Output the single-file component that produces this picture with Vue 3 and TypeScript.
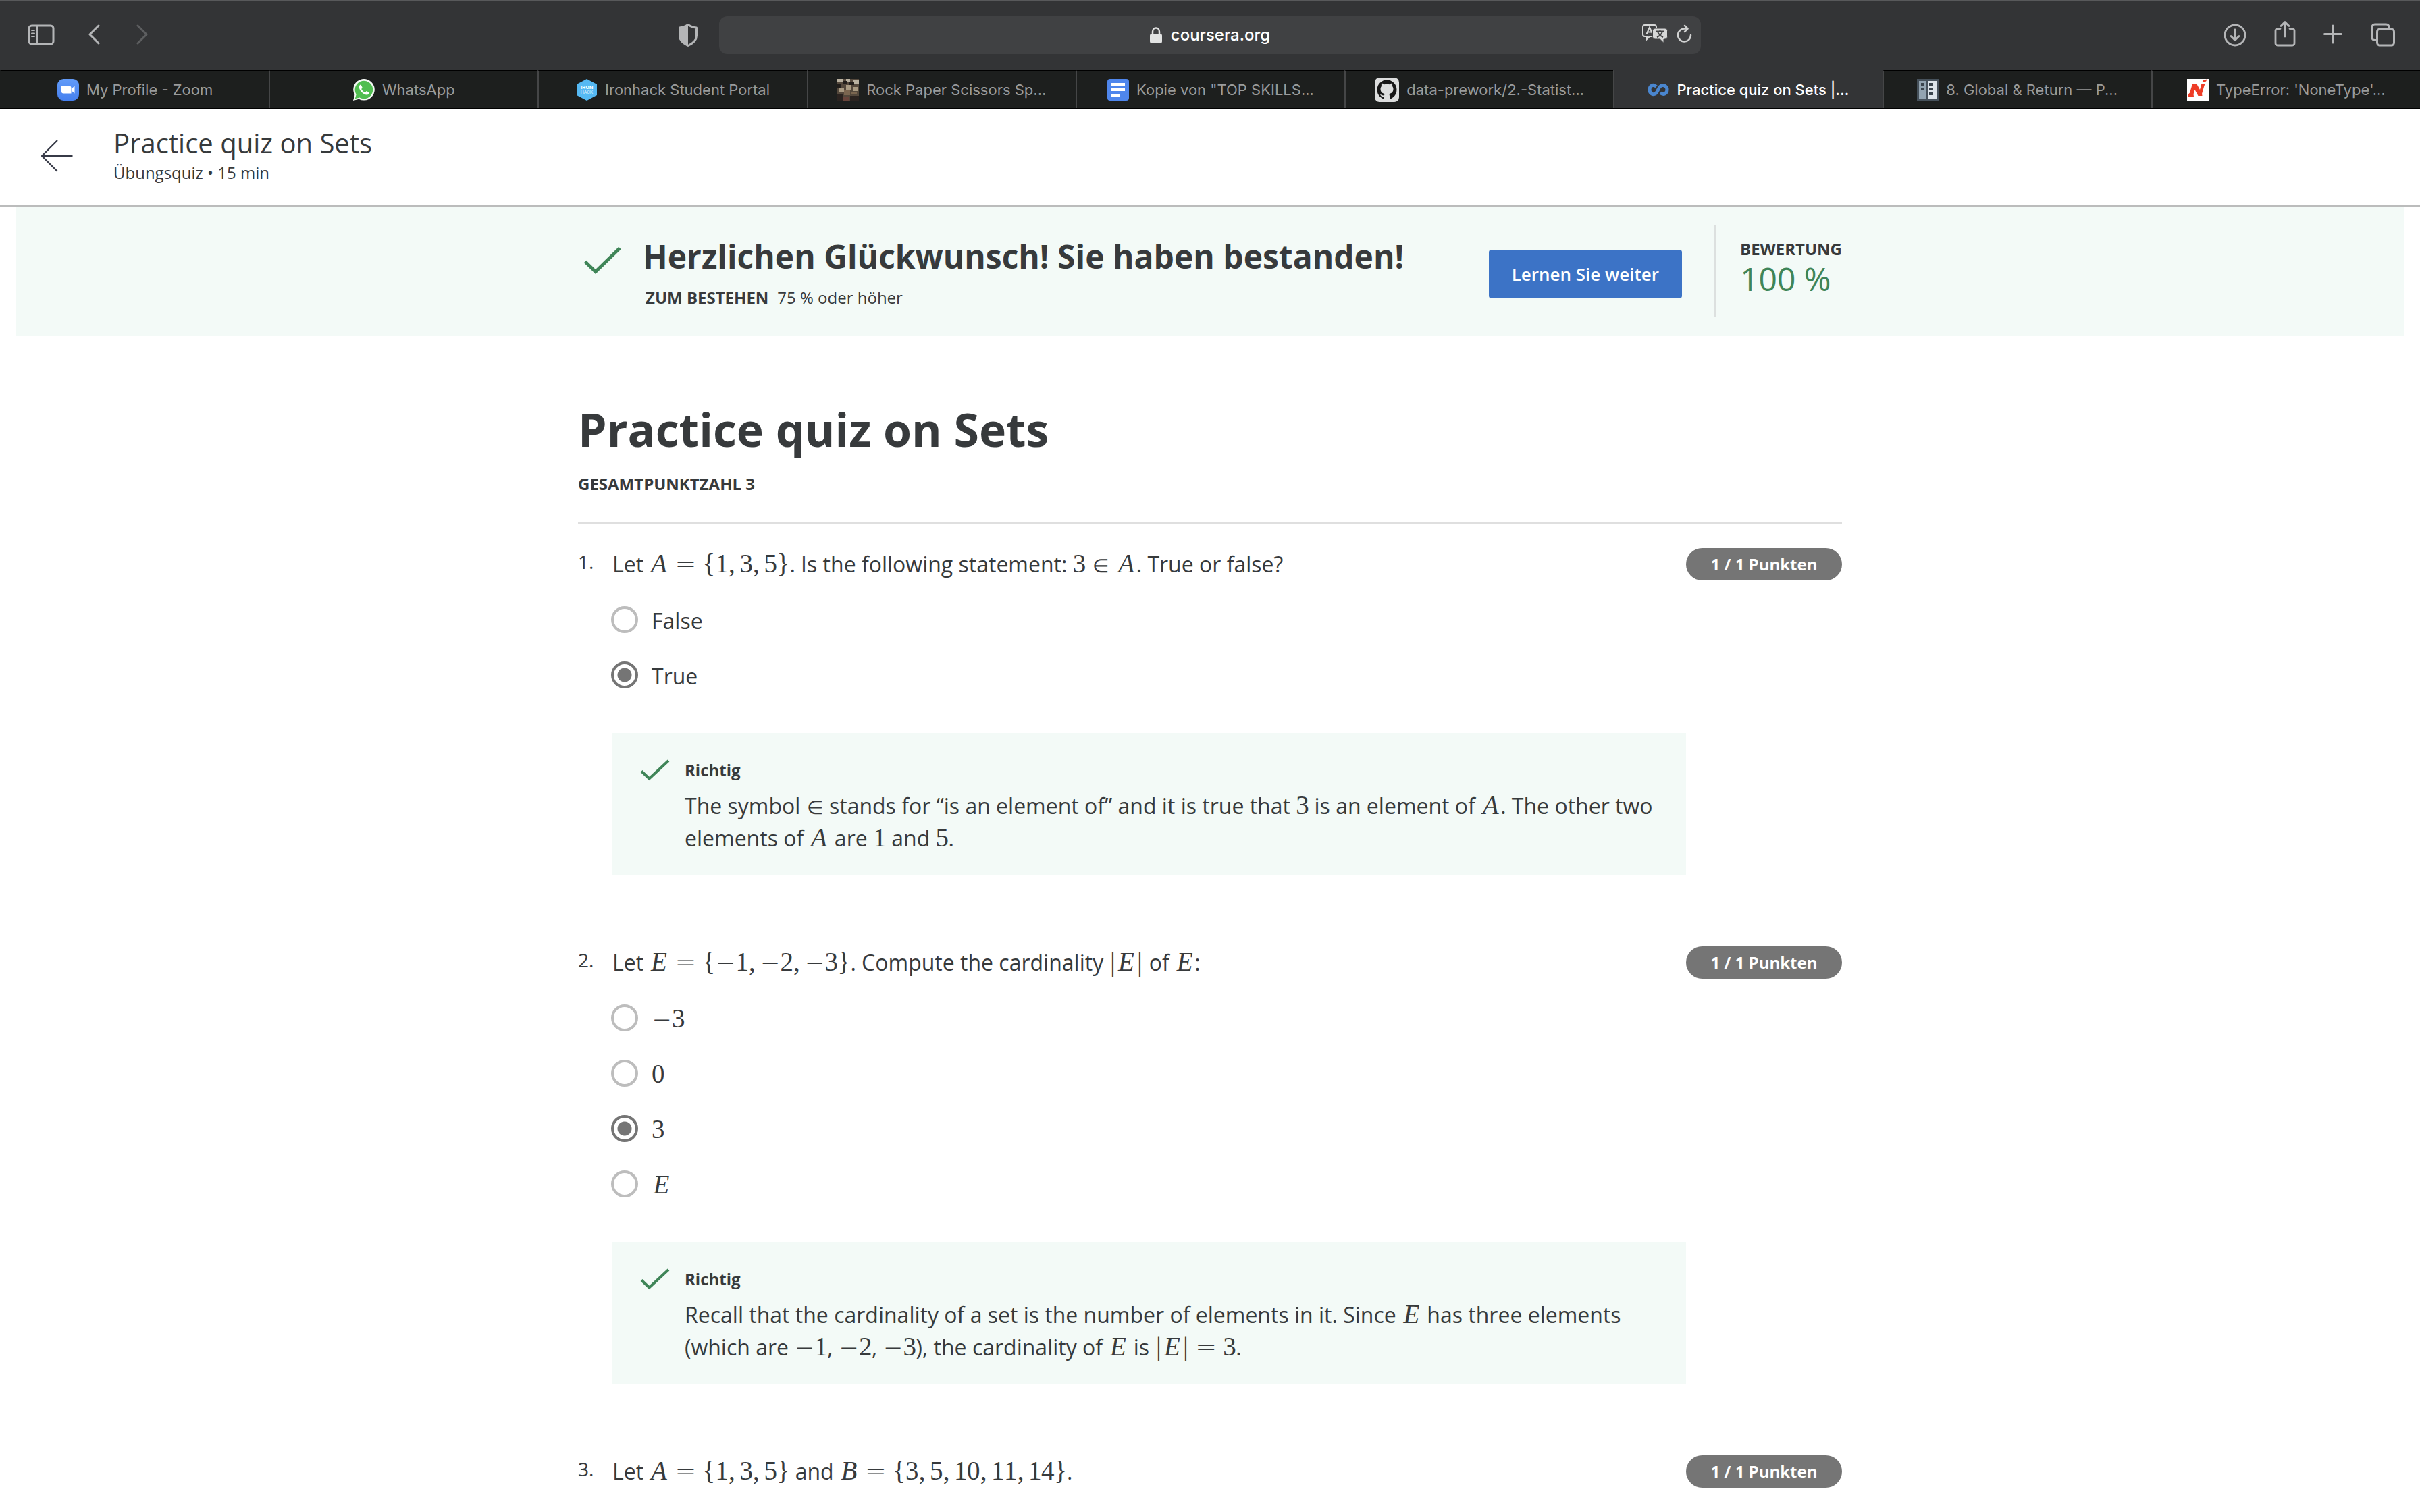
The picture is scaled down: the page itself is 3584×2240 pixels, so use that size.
<script setup lang="ts">
import { ref } from 'vue'

interface Tab { title: string; icon: string; active?: boolean }
interface Part { text?: string; math?: string }
interface Option { id: string; label: Part[] }
interface Question {
  prompt: Part[]
  options: Option[]
  answer: string
  feedback?: Part[]
}

const tabs: Tab[] = [
  { title: 'My Profile - Zoom', icon: 'zoom' },
  { title: 'WhatsApp', icon: 'whatsapp' },
  { title: 'Ironhack Student Portal', icon: 'ironhack' },
  { title: 'Rock Paper Scissors Sp...', icon: 'photo' },
  { title: 'Kopie von "TOP SKILLS...', icon: 'docs' },
  { title: 'data-prework/2.-Statist...', icon: 'github' },
  { title: 'Practice quiz on Sets |...', icon: 'coursera', active: true },
  { title: '8. Global & Return — P...', icon: 'book' },
  { title: "TypeError: 'NoneType'...", icon: 'net' },
]

const questions = ref<Question[]>([
  {
    prompt: [
      { text: 'Let ' }, { math: 'A={1,3,5}' }, { text: '. Is the following statement: ' },
      { math: '3∈A' }, { text: '. True or false?' },
    ],
    options: [
      { id: 'false', label: [{ text: 'False' }] },
      { id: 'true', label: [{ text: 'True' }] },
    ],
    answer: 'true',
    feedback: [
      { text: 'The symbol ' }, { math: '∈' },
      { text: ' stands for “is an element of” and it is true that ' }, { math: '3' },
      { text: ' is an element of ' }, { math: 'A' }, { text: '. The other two elements of ' },
      { math: 'A' }, { text: ' are ' }, { math: '1' }, { text: ' and ' }, { math: '5' }, { text: '.' },
    ],
  },
  {
    prompt: [
      { text: 'Let ' }, { math: 'E={−1,−2,−3}' }, { text: '. Compute the cardinality ' },
      { math: '|E|' }, { text: ' of ' }, { math: 'E' }, { text: ':' },
    ],
    options: [
      { id: 'minus3', label: [{ math: '−3' }] },
      { id: 'zero', label: [{ math: '0' }] },
      { id: 'three', label: [{ math: '3' }] },
      { id: 'set', label: [{ math: 'E' }] },
    ],
    answer: 'three',
    feedback: [
      { text: 'Recall that the cardinality of a set is the number of elements in it. Since ' },
      { math: 'E' }, { text: ' has three elements (which are ' }, { math: '−1' }, { text: ', ' },
      { math: '−2' }, { text: ', ' }, { math: '−3' }, { text: '), the cardinality of ' },
      { math: 'E' }, { text: ' is ' }, { math: '|E|=3' }, { text: '.' },
    ],
  },
  {
    prompt: [
      { text: 'Let ' }, { math: 'A={1,3,5}' }, { text: ' and ' },
      { math: 'B={3,5,10,11,14}' }, { text: '.' },
    ],
    options: [],
    answer: '',
  },
])

/* Spacing class of one math symbol: relations get room only between operands. */
function symbolClass(symbol: string, length: number): string {
  if (/[A-Z]/.test(symbol)) return 'variable'
  if (symbol === '=') return 'equals relation'
  if (symbol === '∈') return length > 1 ? 'member relation' : 'member'
  if (symbol === '−') return 'minus'
  if (symbol === ',') return 'comma'
  if (symbol === '|') return 'bar'
  return 'digit'
}

/* Words of a running text, each keeping the space that follows it. */
function words(text = ''): string[] {
  return text.match(/\s*\S+\s*/g) ?? [text]
}
</script>

<template>
  <div class="window">
    <header class="toolbar">
      <div class="tools">
        <button class="tool" aria-label="Sidebar">
          <svg width="40" height="32" viewBox="0 0 40 32" fill="none" stroke="#b4b5b7" stroke-width="3"><rect x="2" y="2" width="36" height="27" rx="4" /><path d="M14.500 2v27" /><path d="M6 9h4M6 13.500h4M6 18h4" stroke-width="2" stroke-linecap="round" /></svg>
        </button>
        <button class="tool back" aria-label="Back">
          <svg width="20" height="32" viewBox="0 0 20 32" fill="none" stroke="#b4b5b7" stroke-width="3" stroke-linecap="round" stroke-linejoin="round"><path d="M15 2L2 15l13 13" /></svg>
        </button>
        <button class="tool forward" aria-label="Forward">
          <svg width="20" height="32" viewBox="0 0 20 32" fill="none" stroke="#5d5e60" stroke-width="3" stroke-linecap="round" stroke-linejoin="round"><path d="M3 2l13 13L3 28" /></svg>
        </button>
        <button class="tool shield" aria-label="Privacy report">
          <svg width="28" height="34" viewBox="0 0 28 34"><path d="M14 1.500C10 4.500 6 5.500 1.500 6v12c0 7 6 11.500 12.500 14.500C20.500 29.500 26.500 25 26.500 18V6C22 5.500 18 4.500 14 1.500z" fill="none" stroke="#b4b5b7" stroke-width="3" stroke-linejoin="round" /><path d="M14 2v30C7 29 2 25 2 18V6.500C7 6 10 5 14 2z" fill="#b4b5b7" /></svg>
        </button>
      </div>
      <div class="address">
        <div class="host">
          <svg width="18" height="24" viewBox="0 0 18 24"><rect x="0" y="10" width="18" height="14" rx="3" fill="#e2e3e3" /><path d="M4 11V7a5 5.500 0 0 1 10 0v4" fill="none" stroke="#e2e3e3" stroke-width="2.500" /></svg>
          <span>coursera.org</span>
        </div>
        <div class="address-tools">
          <button class="tool" aria-label="Translate">
            <svg width="38" height="32" viewBox="0 0 38 32"><path d="M4 1h14a3 3 0 0 1 3 3v11a3 3 0 0 1-3 3H11l-4 4v-4H4a3 3 0 0 1-3-3V4a3 3 0 0 1 3-3z" fill="none" stroke="#d6d7d7" stroke-width="2" /><path d="M6.500 14.500L11 4.500l4.500 10M8 11.500h6" fill="none" stroke="#d6d7d7" stroke-width="2" /><path d="M19 6h15a3.500 3.500 0 0 1 3.500 3.500v9A3.500 3.500 0 0 1 34 22h-2v5.500L26.500 22H19a3.500 3.500 0 0 1-3.500-3.500v-9A3.500 3.500 0 0 1 19 6z" fill="#d6d7d7" stroke="#404143" /><path d="M21 10.500h11M26.500 8V10.500M23 11c1.500 4 4.500 6.500 8 8M30 11c-1.500 4-4.500 6.500-8 8" fill="none" stroke="#404143" stroke-width="2" /></svg>
          </button>
          <button class="tool" aria-label="Reload">
            <svg width="22" height="32" viewBox="0 0 22 32" fill="none" stroke="#d0d1d1" stroke-width="2.500" stroke-linecap="round" stroke-linejoin="round"><path d="M20 16A9.500 9.500 0 1 1 11 6.500h4" /><path d="M11 2L15.500 6.500 11 11" /></svg>
          </button>
        </div>
      </div>
      <div class="tools end">
        <button class="tool" aria-label="Downloads">
          <svg width="34" height="34" viewBox="0 0 34 34" fill="none" stroke="#b4b5b7" stroke-width="2.800" stroke-linecap="round" stroke-linejoin="round"><circle cx="17" cy="17" r="15" /><path d="M17 9v15M11 18.500l6 6 6-6" /></svg>
        </button>
        <button class="tool" aria-label="Share">
          <svg width="32" height="44" viewBox="0 0 32 44" fill="none" stroke="#b4b5b7" stroke-width="2.800" stroke-linecap="round" stroke-linejoin="round"><path d="M9 12.500H5a3 3 0 0 0-3 3V34a3 3 0 0 0 3 3h22a3 3 0 0 0 3-3V15.500a3 3 0 0 0-3-3h-4" /><path d="M16 24V3M10 8.500L16 2.500l6 6" /></svg>
        </button>
        <button class="tool" aria-label="New tab">
          <svg width="28" height="36" viewBox="0 0 28 36" fill="none" stroke="#b4b5b7" stroke-width="3" stroke-linecap="round"><path d="M14 4v25M1.500 16.500h25" /></svg>
        </button>
        <button class="tool" aria-label="Tab overview">
          <svg width="38" height="36" viewBox="0 0 38 36" fill="none" stroke="#b4b5b7" stroke-width="3" stroke-linejoin="round"><rect x="10.500" y="9" width="25" height="24" rx="4" /><path d="M10 25.500H7a4 4 0 0 1-4-4V6a4 4 0 0 1 4-4h17a4 4 0 0 1 4 4v3" /></svg>
        </button>
      </div>
    </header>

    <nav class="tabs">
      <a v-for="tab in tabs" :key="tab.title" href="#" class="tab" :class="{ active: tab.active }">
        <svg v-if="tab.icon === 'zoom'" class="favicon" viewBox="0 0 32 32"><defs><linearGradient id="zoomBlue" x2="0" y2="1"><stop stop-color="#629bf8" /><stop offset="1" stop-color="#4680ef" /></linearGradient></defs><rect width="32" height="32" rx="9" fill="url(#zoomBlue)" /><path d="M6 10.500h11.500a3 3 0 0 1 3 3v8H9a3 3 0 0 1-3-3zM21.500 14l4-3.500v11l-4-3.500z" fill="#fff" /></svg>
        <svg v-else-if="tab.icon === 'whatsapp'" class="favicon" viewBox="0 0 32 32"><path d="M0 32l2.300-8.300A15.800 15.800 0 1 1 8.500 29.700z" fill="#f4f8f4" /><path d="M2.800 29.200l1.800-6.200a13.300 13.300 0 1 1 4.800 4.600z" fill="#51be51" /><path d="M11.500 8.500c-.8-.3-3 1-2.800 3.700C9 17 15.500 23.500 20 23.500c2.700 0 3.800-2.200 3.500-3.500l-3.800-2-2 2.200c-2.500-1-4.700-3.200-5.500-5.200l1.500-2z" fill="#fff" /></svg>
        <svg v-else-if="tab.icon === 'ironhack'" class="favicon" viewBox="0 0 32 32"><path d="M16 0l15 8v16l-15 8-15-8V8z" fill="#55b9f3" /><text x="16" y="15" text-anchor="middle" font-family="Roboto, sans-serif" font-weight="700" font-size="8" fill="#fff">IRON</text><text x="16" y="22" text-anchor="middle" font-family="Roboto, sans-serif" font-size="7" fill="#d8effc">HACK</text></svg>
        <svg v-else-if="tab.icon === 'photo'" class="favicon" viewBox="0 0 32 32"><rect width="32" height="32" fill="#54483c" /><path d="M0 0h9v5H0zM13 0h6v4h-6zM24 1h8v6h-8z" fill="#b9b1a0" /><path d="M9 3h5v5H9zM18 5h7v4h-7zM0 8h5v5H0z" fill="#221e1b" /><path d="M3 13h7v7H3zM13 9h8v7h-8zM24 12h6v6h-6z" fill="#a99a82" /><path d="M10 17h9v7h-9zM21 19h8v4h-8z" fill="#7b6650" /><path d="M0 22h9v10H0zM19 25h13v7H19z" fill="#2b2320" /><path d="M9 26h9v6H9z" fill="#69443b" /></svg>
        <svg v-else-if="tab.icon === 'docs'" class="favicon" viewBox="0 0 32 32"><rect width="32" height="32" rx="4" fill="#4f86ec" /><path d="M6 6h20v4H6zM6 14h20v4H6zM6 22h13v4H6z" fill="#fff" /></svg>
        <svg v-else-if="tab.icon === 'github'" class="favicon large" viewBox="0 0 36 36"><rect width="36" height="36" rx="7" fill="#dcdddd" /><circle cx="18" cy="18" r="14.500" fill="#161616" /><path d="M14 33v-5c-3.500 1-5-1-6-3 2 0 3 2 6 1.500 0-1 .5-1.800 1-2.300-4-.7-6.500-3-6.500-7.200 0-1.800.5-3.200 1.600-4.300-.4-1.500-.3-3 .2-4.200 1.500 0 3 .8 4.200 1.700 2.200-.6 4.800-.6 7 0C22.700 9.300 24.200 8.500 25.700 8.500c.5 1.200.6 2.700.2 4.200 1.100 1.100 1.600 2.500 1.600 4.300 0 4.200-2.500 6.500-6.500 7.200.7.800 1 1.800 1 3V33z" fill="#dcdddd" /></svg>
        <svg v-else-if="tab.icon === 'coursera'" class="favicon" viewBox="0 0 32 32" fill="none" stroke="#4a86cf" stroke-width="5"><path d="M13 11.500C8 7 3 10.500 3 16S8 24.500 12 21.500C16 18.500 15.500 13 19.500 10.500 24 8 29 11 29 16s-5 9-10 4.500" /></svg>
        <svg v-else-if="tab.icon === 'book'" class="favicon" viewBox="0 0 32 32"><rect width="32" height="32" fill="#46515b" /><rect x="3" y="3" width="11" height="26" fill="#93a4b1" /><rect x="16" y="3" width="13" height="26" fill="#dde4ea" /><path d="M6 6h4v4H6zM6 13h4v4H6zM18 6h6v4h-6zM18 13h6v4h-6zM18 20h6v4h-6z" fill="#3a444d" /></svg>
        <svg v-else class="favicon" viewBox="0 0 32 32"><rect width="32" height="32" fill="#fff" /><path d="M1 26l1.500-4L4 20.500 7.500 9 7 7h7l5 9 2.500-9H27l-1.500 3-3.500 12 .5 3h-6l-5-9-2 6.500.5 3.500zM22.500 4.500L24 2l5-1.500L28.500 3l-2.500 2z" fill="#ee3c26" /></svg>
        <span>{{ tab.title }}</span>
      </a>
    </nav>

    <header class="course-bar">
      <a href="#" class="return" aria-label="Zurück">
        <svg width="48" height="48" viewBox="0 0 48 48" fill="none" stroke="#373a47" stroke-width="2.200"><path d="M25 1L2 24l23 23M2 24h45.500" /></svg>
      </a>
      <div class="course-text">
        <div class="course-title">Practice quiz on Sets</div>
        <div class="course-meta">Übungsquiz • 15 min</div>
      </div>
    </header>

    <section class="banner">
      <div class="banner-inner">
        <svg class="banner-check" width="56" height="42" viewBox="0 0 56 42" fill="none" stroke="#3f8558" stroke-width="5"><path d="M2.500 22.500L18 37.500 54 2.500" /></svg>
        <div class="banner-text">
          <h2>Herzlichen Glückwunsch! Sie haben bestanden!</h2>
          <p><strong>ZUM BESTEHEN</strong><span>75 % oder höher</span></p>
        </div>
        <button class="continue">Lernen Sie weiter</button>
        <div class="score">
          <div class="score-label">BEWERTUNG</div>
          <div class="score-value">100 %</div>
        </div>
      </div>
    </section>

    <main class="quiz">
      <h1>Practice quiz on Sets</h1>
      <div class="total">GESAMTPUNKTZAHL 3</div>
      <ol class="questions">
        <li v-for="(question, index) in questions" :key="index" class="question">
          <div class="number">{{ index + 1 }}.</div>
          <div class="content">
            <p class="prompt"><template v-for="(part, p) in question.prompt" :key="p"><span v-if="part.math" class="math"><span v-for="(s, k) in part.math" :key="k" class="symbol" :class="symbolClass(s, part.math.length)">{{ s }}</span></span><template v-else>{{ part.text }}</template></template></p>
            <div v-if="question.options.length" class="options">
              <label v-for="option in question.options" :key="option.id" class="option">
                <input v-model="question.answer" type="radio" :name="`question-${index}`" :value="option.id" />
                <span><template v-for="(part, p) in option.label" :key="p"><span v-if="part.math" class="math"><span v-for="(s, k) in part.math" :key="k" class="symbol" :class="symbolClass(s, part.math.length)">{{ s }}</span></span><template v-else>{{ part.text }}</template></template></span>
              </label>
            </div>
            <div v-if="question.feedback" class="feedback">
              <svg class="check" width="44" height="32" viewBox="0 0 44 32" fill="none" stroke="#3f8558" stroke-width="4"><path d="M2 17.500L13.500 28.500 42 2" /></svg>
              <div>
                <div class="verdict">Richtig</div>
                <p class="explanation"><template v-for="(part, p) in question.feedback" :key="p"><span v-if="part.math" class="math"><span v-for="(s, k) in part.math" :key="k" class="symbol" :class="symbolClass(s, part.math.length)">{{ s }}</span></span><template v-else><span v-for="(word, w) in words(part.text)" :key="w">{{ word }}</span></template></template></p>
              </div>
            </div>
          </div>
          <div class="points">1 / 1 Punkten</div>
        </li>
      </ol>
    </main>
  </div>
</template>

<style>
body {
  margin: 0;
  background: #fff;
}
</style>

<style scoped>
.window {
  font-family: "Open Sans", "Noto Sans", sans-serif;
  color: #373a3c;
}
h1, h2, p, ol {
  margin: 0;
  padding: 0;
}
svg {
  display: block;
  flex: none;
}

/* Browser toolbar */
.toolbar {
  height: 104px;
  display: grid;
  grid-template-columns: 1fr minmax(0, 1454px) 1fr;
  align-items: center;
  box-shadow: inset 0 2px 0 #58595b;
  background: #333436;
  font-family: Inter, Roboto, sans-serif;
}
.tools {
  display: flex;
  align-items: center;
  padding: 0 32px 0 41px;
}
.tools.end {
  justify-content: flex-end;
  gap: 41px;
  padding-right: 36px;
}
.tool {
  padding: 0;
  border: 0;
  background: none;
}
.back {
  margin-left: 50px;
}
.forward {
  margin-left: 50px;
}
.shield {
  margin-left: auto;
}
.address {
  height: 56px;
  display: grid;
  grid-template-columns: 1fr auto 1fr;
  align-items: center;
  border-radius: 12px;
  background: #404143;
}
.host {
  grid-column: 2;
  display: flex;
  align-items: center;
  gap: 13px;
  color: #fff;
  font-size: 24px;
  font-weight: 500;
  line-height: 32px;
}
.address-tools {
  display: flex;
  align-items: center;
  justify-content: flex-end;
  gap: 14px;
  padding-right: 13px;
}

/* Tab strip */
.tabs {
  display: flex;
  border-bottom: 1px solid #000;
  box-shadow: 0 1px 0 #b5b5b5;
  font-family: Inter, Roboto, sans-serif;
}
.tab {
  box-sizing: border-box;
  flex: 1 1 0;
  min-width: 0;
  height: 56px;
  display: flex;
  align-items: center;
  justify-content: center;
  gap: 11px;
  border-top: 1px solid #000;
  border-left: 2px solid #454647;
  background: #1d1f1e;
  color: #9a9b9b;
  font-size: 22px;
  line-height: 32px;
  white-space: nowrap;
  text-decoration: none;
}
.tab:first-child {
  border-left-color: #1d1f1e;
}
.tab.active {
  border-top-color: #333436;
  background: #333436;
  color: #fff;
  font-weight: 500;
}
.favicon {
  width: 32px;
  height: 32px;
}
.favicon.large {
  width: 36px;
  height: 36px;
}

/* Course header */
.course-bar {
  display: flex;
  align-items: center;
  gap: 60px;
  height: 140px;
  padding: 0 0 3px 60px;
  border-bottom: 2px solid #bbbcbc;
}
.course-text {
  padding-bottom: 6px;
}
.course-title {
  font-size: 40px;
  line-height: 56px;
}
.course-meta {
  font-size: 24px;
  line-height: 32px;
}

/* Result banner */
.banner {
  margin: 0 24px;
  background: #f3faf7;
}
.banner-inner {
  box-sizing: border-box;
  max-width: 1872px;
  margin: 0 auto;
  padding: 28px 0;
  display: flex;
  align-items: flex-start;
}
.banner-check {
  margin: 31px 32px 0 8px;
}
.banner-text {
  flex: 1;
  padding-top: 14px;
}
.banner-text h2 {
  font-size: 48px;
  font-weight: 700;
  line-height: 64px;
  white-space: nowrap;
}
.banner-text p {
  display: flex;
  gap: 13px;
  margin-top: 13px;
  padding-left: 4px;
  font-size: 24px;
  line-height: 32px;
}
.continue {
  height: 72px;
  margin: 36px 48px 0 0;
  padding: 0 34px;
  border: 0;
  border-radius: 4px;
  background: #3c73c6;
  color: #fff;
  font: 600 26px/32px "Open Sans", "Noto Sans", sans-serif;
}
.score {
  box-sizing: border-box;
  width: 189px;
  height: 136px;
  padding: 19px 0 0 36px;
  border-left: 2px solid #dce0df;
}
.score-label {
  font-size: 24px;
  font-weight: 700;
  line-height: 32px;
}
.score-value {
  color: #3f8558;
  font-size: 48px;
  line-height: 56px;
}

/* Quiz */
.quiz {
  max-width: 1872px;
  margin: 0 auto;
  padding: 98px 0 36px;
}
h1 {
  font-size: 68px;
  font-weight: 700;
  line-height: 80px;
}
.total {
  margin: 25px 0 41px;
  font-size: 24px;
  font-weight: 700;
  line-height: 32px;
}
.questions {
  display: flex;
  flex-direction: column;
  gap: 106px;
  padding-top: 36px;
  border-top: 2px solid #dfdfdf;
  list-style: none;
}
.question {
  display: flex;
  align-items: flex-start;
}
.number {
  flex: none;
  width: 51px;
  font-size: 28px;
  line-height: 40px;
}
.content {
  flex: 1;
  min-width: 0;
  font-size: 32px;
  line-height: 48px;
}
.points {
  box-sizing: border-box;
  flex: none;
  width: 231px;
  border-radius: 24px;
  background: #757575;
  color: #fff;
  font-size: 24px;
  font-weight: 700;
  line-height: 48px;
  text-align: center;
}
.options {
  display: flex;
  flex-direction: column;
  gap: 34px;
  margin: 36px 0 0 -2px;
}
.option {
  display: flex;
  align-items: flex-start;
  gap: 20px;
}
.option input {
  appearance: none;
  box-sizing: border-box;
  width: 40px;
  height: 40px;
  margin: 2px 0 0;
  border: 4px solid #bdbdbd;
  border-radius: 50%;
  background: #fff;
}
.option input:checked {
  border-color: #757575;
  background: radial-gradient(circle, #757575 10px, #fff 11px);
}
.feedback {
  display: flex;
  align-items: flex-start;
  gap: 22px;
  margin-top: 60px;
  padding: 39px 40px 30px 41px;
  background: #f3faf7;
}
.verdict {
  margin-bottom: 13px;
  font-size: 24px;
  font-weight: 700;
  line-height: 32px;
}

/* Inline math */
.math {
  font-family: "Liberation Serif", serif;
  font-size: 39px;
  line-height: 39px;
  white-space: nowrap;
}
.symbol {
  display: inline-block;
  text-align: center;
}
.digit {
  width: 19px;
}
.variable {
  width: 29px;
  font-style: italic;
}
.equals,
.minus {
  width: 30px;
  font-family: "DejaVu Sans", sans-serif;
  font-size: 35px;
  font-weight: 200;
}
.equals {
  font-size: 38px;
}
.member {
  width: 26px;
  font-family: "DejaVu Sans", sans-serif;
  font-size: 28px;
  font-weight: 200;
}
.relation {
  margin: 0 11px 0 9px;
}
.comma {
  width: 11px;
  margin-right: 6px;
}
.bar {
  width: 11px;
}
</style>
